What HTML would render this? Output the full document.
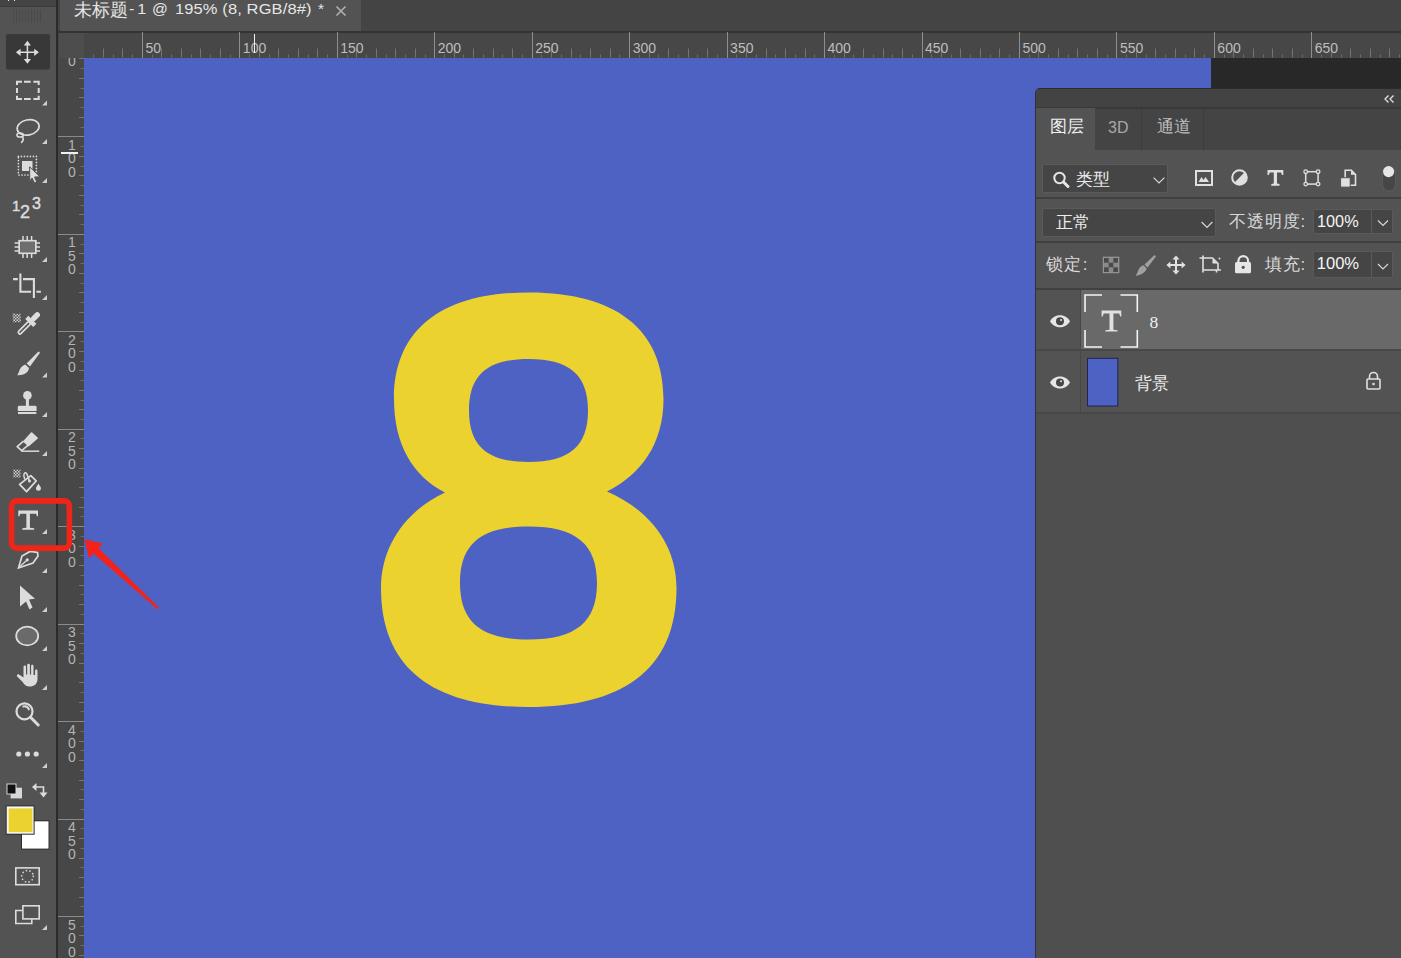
<!DOCTYPE html>
<html><head><meta charset="utf-8">
<style>
*{margin:0;padding:0;box-sizing:border-box}
html,body{width:1401px;height:958px;overflow:hidden;background:#282828;font-family:"Liberation Sans",sans-serif;-webkit-font-smoothing:antialiased}
.a{position:absolute}
#toolbar{left:0;top:0;width:56px;height:958px;background:#535353}
#tbtop{left:0;top:0;width:56px;height:7px;background:#444444}
#tbline{left:56px;top:0;width:2px;height:958px;background:#2b2b2b}
#tabbar{left:58px;top:0;width:1343px;height:32px;background:#444444}
#tab{left:60px;top:0;width:301px;height:31px;background:#535353}
#tabline{left:58px;top:31px;width:1343px;height:2px;background:#333}
#ruler-top{left:58px;top:33px;width:1343px;height:25px;background:#474747}
#ruler-left{left:58px;top:58px;width:26px;height:900px;background:#474747}
#corner{left:58px;top:33px;width:26px;height:25px;background:#4d4d4d;border-left:1px solid #444}
#canvas{left:84px;top:58px;width:1127px;height:900px;background:#4e62c4}
#paste{left:1211px;top:58px;width:190px;height:30px;background:#282828}
svg text{font-family:"Liberation Sans",sans-serif}
.rt text{font-size:14px;fill:#bdbdbd}
.rl text{font-size:14px;fill:#b4b4b4;text-anchor:middle}
#panel{left:1035px;top:88px;width:366px;height:870px;background:#4f4f4f;border-top-left-radius:5px;border-left:1px solid #2f3140;border-top:1px solid #2c2c2c;overflow:hidden}
.pt{color:#e8e8e8;font-size:16px;white-space:nowrap}
</style></head><body>
<div class="a" id="toolbar"></div>
<div class="a" id="tbtop"></div>
<div class="a" style="left:0;top:6px;width:56px;height:1px;background:#3b3b3b"></div>
<div class="a" style="left:7.8px;top:0;width:1.5px;height:1.2px;background:#f0f0f0"></div>
<div class="a" style="left:13.8px;top:0;width:1.5px;height:1.2px;background:#f0f0f0"></div>
<div class="a" id="tbline"></div>

<svg class="a" style="left:0;top:0" width="56" height="958">
<defs>
<pattern id="chk" width="3" height="3" patternUnits="userSpaceOnUse"><rect width="3" height="3" fill="#535353"/><rect width="1.5" height="1.5" fill="#cfcfcf"/><rect x="1.5" y="1.5" width="1.5" height="1.5" fill="#cfcfcf"/></pattern>
</defs>
<!-- grip -->
<g fill="#4a4a4a">
<rect x="13" y="10" width="1" height="12"/><rect x="16" y="10" width="1" height="12"/><rect x="19" y="10" width="1" height="12"/><rect x="22" y="10" width="1" height="12"/><rect x="25" y="10" width="1" height="12"/><rect x="28" y="10" width="1" height="12"/><rect x="31" y="10" width="1" height="12"/><rect x="34" y="10" width="1" height="12"/><rect x="37" y="10" width="1" height="12"/><rect x="40" y="10" width="1" height="12"/>
</g>
<!-- selected move tool bg -->
<rect x="6" y="34" width="44" height="35.5" rx="2" fill="#383838"/>
<g fill="#dcdcdc" stroke="none">
<!-- move -->
<path d="M27.40 40.80 L31.00 45.50 L28.15 45.50 L28.15 51.55 L34.20 51.55 L34.20 48.70 L38.90 52.30 L34.20 55.90 L34.20 53.05 L28.15 53.05 L28.15 59.10 L31.00 59.10 L27.40 63.80 L23.80 59.10 L26.65 59.10 L26.65 53.05 L20.60 53.05 L20.60 55.90 L15.90 52.30 L20.60 48.70 L20.60 51.55 L26.65 51.55 L26.65 45.50 L23.80 45.50 Z"/>
</g>
<g fill="none" stroke="#dcdcdc" stroke-width="2">
<!-- marquee dashed -->
<path d="M17 85 V81.7 H22 M24 81.7 H30.7 M33.4 81.7 H38.7 V85 M17 88 V93 M38.7 88 V93 M17 95.7 V99 H22 M24 99 H30.7 M33.4 99 H38.7 V95.7"/>
<!-- lasso -->
<ellipse cx="28.15" cy="127.4" rx="11.1" ry="7.6" transform="rotate(-12 28.15 127.4)" stroke-width="1.7"/>
<ellipse cx="20.1" cy="135" rx="3.2" ry="2.1" stroke-width="1.5"/><path d="M22.3 136.5 C23.8 138.5 23.4 140.5 21.6 142.4" stroke-width="1.6" stroke-linecap="round"/>
<!-- object select dotted -->
<path d="M18.4 156.4 H36.4 V175 H18.4 Z" stroke-dasharray="0 3" stroke-linecap="round" stroke-width="1.7"/>
<!-- frame -->
<rect x="19.2" y="240.8" width="16.6" height="12.4" stroke-width="1.8"/>
<path d="M23 236 V240 M27.2 236 V240 M31.6 236 V240 M23 254 V258 M27.2 254 V258 M31.6 254 V258 M14.6 243 H19 M14.6 247 H19 M14.6 251 H19 M36 243 H40 M36 247 H40 M36 251 H40" stroke-width="1.5"/>
<!-- crop -->
<path d="M20.4 273.6 V291.7 H31.1 M13.1 279.1 H17.8 M23 279.1 H33.9 V298 M36.4 291.7 H40.9" stroke-width="2.1"/>
<!-- eyedropper tube -->

<!-- eraser -->
<path d="M23.5 441.2 L17.2 446.6 L21.6 450.6 L28.2 445.2" stroke-width="1.7" stroke-linejoin="round"/>
<path d="M21.4 451.2 H39.3" stroke-width="1.5"/>
<!-- bucket -->
<path d="M30.8 475.6 L36.2 480.9 L26.6 491.6 L19.6 484.4 Z" stroke-width="1.7" stroke-linejoin="round"/>
<path d="M24.8 479.5 C22.6 474.5 24.6 471 26.6 473.5 L29.4 480.6" stroke-width="1.5"/>
<!-- pen outline -->
<path d="M18.5 568 L22 556 L30 551.5 L37.5 552.5 L38 556 L33 563 Z" stroke-width="1.7"/>
<path d="M19 567.5 L26.5 560.5" stroke-width="1.3"/>
<!-- ellipse -->
<ellipse cx="27.2" cy="636" rx="11" ry="9.3" fill="#6a6a6a" stroke-width="1.8"/>
<!-- zoom -->
<circle cx="24.5" cy="711.4" r="8" stroke-width="2.2"/>
<path d="M30.5 717.3 L38.2 725" stroke-width="3" stroke-linecap="round"/>
<path d="M23.2 706.5 A4.9 4.9 0 0 1 28.9 709.4" stroke-width="1.9" stroke-linecap="round"/>
<!-- quick mask -->
<rect x="15.8" y="867.9" width="23.4" height="16.8" stroke-width="1.6"/>
<circle cx="27.5" cy="876.3" r="5.8" stroke-dasharray="0 3.644" stroke-linecap="round" stroke-width="1.7"/>
<!-- screen mode -->
<rect x="22.9" y="905.8" width="16.3" height="13.1" stroke-width="1.6"/>
<path d="M22.1 910.5 H15.8 V923.5 H31.8 V918.9" stroke-width="1.6"/>
<!-- swap arrows -->
<path d="M36 787 H43.5 V794" stroke-width="1.6"/>
</g>
<g fill="#dcdcdc">
<!-- object select inner -->
<rect x="22" y="161" width="10.5" height="10"/>
<path d="M29.6 166.8 L40 176.8 L34.5 177 L36.8 182 L34.5 183 L32 178 L29.8 181.5 Z" stroke="#535353" stroke-width="1"/>
<!-- frame fill -->
<rect x="20.2" y="241.8" width="14.6" height="10.4" fill="#6e6e6e"/>
<!-- eyedropper -->
<g transform="translate(30.8 321.4) rotate(-45)">
<rect x="-17" y="-1.65" width="15.5" height="3.3" rx="1.65" fill="none" stroke="#dcdcdc" stroke-width="1.7"/>
<rect x="-2.2" y="-5.7" width="4.4" height="11.4"/>
<rect x="1.5" y="-2.75" width="10.4" height="5.5" rx="2.75"/>
</g>
<path d="M12.6 313 Q16.5 314.5 20.5 313.5 L21 322.5 Q17 321.5 13 322.5 Z" fill="url(#chk)"/>
<!-- brush -->
<path d="M38.2 351.8 C39.5 351.5 40 352.3 39.6 353.3 L30 366.4 L26.6 363.4 Z"/>
<path d="M25.3 364.6 L29 368 C28.5 372.5 24 375.5 17.3 375.2 C19.5 373 19 366.5 25.3 364.6 Z"/>
<!-- stamp -->
<circle cx="27.4" cy="395.4" r="4.3"/>
<rect x="25.9" y="398.5" width="3" height="8"/>
<path d="M19.2 405.8 H35.2 Q36.6 405.8 36.6 407.2 V410.9 H17.8 V407.2 Q17.8 405.8 19.2 405.8 Z"/>
<rect x="18" y="412" width="18.3" height="2"/>
<!-- eraser fill -->
<path d="M22.8 441.5 L31 432.5 Q31.6 431.9 32.2 432.5 L37.6 437.6 Q38.2 438.2 37.6 438.8 L28.6 446.6 Z"/>
<!-- bucket -->
<path d="M13.2 469.2 Q16.8 470.3 20.4 469.2 L20.6 477.8 Q17 476.8 13.4 477.8 Z" fill="url(#chk)"/>
<circle cx="29.5" cy="481" r="1.5"/>
<path d="M38.4 483.8 C40 486 41 487.3 41 488.3 A2.5 2.5 0 0 1 36 488.3 C36 487.3 37 486 38.4 483.8 Z"/>
<!-- pen dot -->
<circle cx="27.2" cy="559.8" r="1.6"/>
<!-- path select arrow -->
<path d="M20 585.6 L35 598.8 L29 599.5 L32.5 607.5 L29.5 609.5 L26 601.5 L20 606.6 Z"/>
<!-- hand -->
<path d="M22.6 682 L17.2 676.6 C16.2 675.5 17.5 673.4 19 674.4 L23.5 677.4 V666.8 C23.5 665.2 26 665.2 26 666.8 V674.5 H27.2 V665 C27.2 663.4 29.9 663.4 29.9 665 V674.5 H31.1 V666 C31.1 664.4 33.5 664.4 33.5 666 V675 H35.1 V670.6 C35.1 669 37.5 669 37.5 670.6 V679 C37.5 684 34 686.6 29.5 686.6 C26.5 686.6 24.5 685 22.6 682 Z"/>
<!-- dots -->
<circle cx="18.8" cy="754" r="2.6"/><circle cx="27.4" cy="754" r="2.6"/><circle cx="36.2" cy="754" r="2.6"/>
<!-- T -->
<path d="M18.3 510.5 H38 V516.3 H37 L36 513.8 H29.9 V527.8 L34.2 528.3 V529.8 H22.3 V528.3 L26.4 527.8 V513.8 H20.3 L19.3 516.3 H18.3 Z"/>
<!-- default colors -->
<rect x="10.6" y="787.7" width="11.4" height="10.7" fill="#d8d8d8"/>
<rect x="7" y="784" width="9" height="10" fill="#111" stroke="#d8d8d8" stroke-width="1"/>
<path d="M32 787 L36.5 783 V791 Z"/>
<path d="M39.5 792.5 H47.5 L43.5 797.5 Z"/>
<!-- swatches -->
<rect x="21" y="820.3" width="28.5" height="29.3" fill="#2c2c2c"/>
<rect x="22" y="821.3" width="26.5" height="27.3" fill="#ffffff"/>
<rect x="5.7" y="805.4" width="28.9" height="29.3" fill="#2c2c2c"/>
<rect x="6.7" y="806.4" width="26.9" height="27.3" fill="#f6f6f2"/>
<rect x="8.7" y="808.4" width="23.7" height="23.7" fill="#ebd22e"/>
</g>
<!-- corner triangles -->
<g fill="#cfcfcf">
<path d="M47 100.5 V105.5 H42 Z"/>
<path d="M47 139 V144 H42 Z"/>
<path d="M47 178 V183 H42 Z"/>
<path d="M47 257 V262 H42 Z"/>
<path d="M47 295 V300 H42 Z"/>
<path d="M47 372.5 V377.5 H42 Z"/>
<path d="M47 412 V417 H42 Z"/>
<path d="M47 451 V456 H42 Z"/>
<path d="M47 529 V534 H42 Z"/>
<path d="M47 568 V573 H42 Z"/>
<path d="M47 607 V612 H42 Z"/>
<path d="M47 646 V651 H42 Z"/>
<path d="M47 685 V690 H42 Z"/>
<path d="M47 763 V768 H42 Z"/>
<path d="M47 925 V930 H42 Z"/>
</g>
<!-- 123 text -->
<g fill="#dcdcdc" stroke="#dcdcdc" stroke-width="0.45" font-family="Liberation Sans">
<text x="12" y="211" font-size="15">1</text>
<text x="20" y="218" font-size="18">2</text>
<text x="32" y="209" font-size="16">3</text>
</g>
</svg>

<div class="a" id="tabbar"></div>
<div class="a" id="tab"></div>
<div class="a pt" style="left:74.4px;top:0px;line-height:20px;color:#e6e6e6;font-size:18px">未标题</div>
<div class="a pt" id="t1" style="left:128.5px;top:-1px;line-height:20px;color:#e6e6e6;font-size:15px;letter-spacing:2.6px;transform:scaleX(1.08);transform-origin:0 0">-1</div>
<div class="a pt" id="t2" style="left:152px;top:-1px;line-height:20px;color:#e6e6e6;font-size:15px;transform:scaleX(1.04);transform-origin:0 0">@</div>
<div class="a pt" id="t3" style="left:175px;top:-1px;line-height:20px;color:#e6e6e6;font-size:15px;letter-spacing:0.1px;transform:scaleX(1.1);transform-origin:0 0">195% (8, RGB/8#)</div>
<div class="a pt" id="t4" style="left:318px;top:-1px;line-height:20px;color:#e6e6e6;font-size:15.3px">*</div>
<svg class="a" style="left:334px;top:4px" width="14" height="14"><path d="M2.5 2.5 L11.5 11.5 M11.5 2.5 L2.5 11.5" stroke="#b4b4b4" stroke-width="1.5"/></svg>
<div class="a" id="tabline"></div>
<div class="a" id="ruler-top"></div>
<div class="a" id="ruler-left"></div>
<div class="a" id="canvas"></div>
<div class="a" id="paste"></div>
<svg class="a rt" style="left:0;top:32px" width="1401" height="26"><rect x="93" y="22.5" width="1" height="3" fill="#6a6a6a"/>
<rect x="103" y="16.5" width="1" height="9" fill="#747474"/>
<rect x="113" y="22.5" width="1" height="3" fill="#6a6a6a"/>
<rect x="122" y="16.5" width="1" height="9" fill="#747474"/>
<rect x="132" y="22.5" width="1" height="3" fill="#6a6a6a"/>
<rect x="142" y="0" width="1" height="26" fill="#8e8e8e"/>
<rect x="152" y="22.5" width="1" height="3" fill="#6a6a6a"/>
<rect x="161" y="16.5" width="1" height="9" fill="#747474"/>
<rect x="171" y="22.5" width="1" height="3" fill="#6a6a6a"/>
<rect x="181" y="16.5" width="1" height="9" fill="#747474"/>
<rect x="191" y="22.5" width="1" height="3" fill="#6a6a6a"/>
<rect x="200" y="16.5" width="1" height="9" fill="#747474"/>
<rect x="210" y="22.5" width="1" height="3" fill="#6a6a6a"/>
<rect x="220" y="16.5" width="1" height="9" fill="#747474"/>
<rect x="230" y="22.5" width="1" height="3" fill="#6a6a6a"/>
<text x="145.40" y="21">50</text>
<rect x="239" y="0" width="1" height="26" fill="#8e8e8e"/>
<rect x="249" y="22.5" width="1" height="3" fill="#6a6a6a"/>
<rect x="259" y="16.5" width="1" height="9" fill="#747474"/>
<rect x="269" y="22.5" width="1" height="3" fill="#6a6a6a"/>
<rect x="278" y="16.5" width="1" height="9" fill="#747474"/>
<rect x="288" y="22.5" width="1" height="3" fill="#6a6a6a"/>
<rect x="298" y="16.5" width="1" height="9" fill="#747474"/>
<rect x="308" y="22.5" width="1" height="3" fill="#6a6a6a"/>
<rect x="317" y="16.5" width="1" height="9" fill="#747474"/>
<rect x="327" y="22.5" width="1" height="3" fill="#6a6a6a"/>
<text x="242.85" y="21">100</text>
<rect x="337" y="0" width="1" height="26" fill="#8e8e8e"/>
<rect x="347" y="22.5" width="1" height="3" fill="#6a6a6a"/>
<rect x="356" y="16.5" width="1" height="9" fill="#747474"/>
<rect x="366" y="22.5" width="1" height="3" fill="#6a6a6a"/>
<rect x="376" y="16.5" width="1" height="9" fill="#747474"/>
<rect x="386" y="22.5" width="1" height="3" fill="#6a6a6a"/>
<rect x="395" y="16.5" width="1" height="9" fill="#747474"/>
<rect x="405" y="22.5" width="1" height="3" fill="#6a6a6a"/>
<rect x="415" y="16.5" width="1" height="9" fill="#747474"/>
<rect x="425" y="22.5" width="1" height="3" fill="#6a6a6a"/>
<text x="340.30" y="21">150</text>
<rect x="434" y="0" width="1" height="26" fill="#8e8e8e"/>
<rect x="444" y="22.5" width="1" height="3" fill="#6a6a6a"/>
<rect x="454" y="16.5" width="1" height="9" fill="#747474"/>
<rect x="463" y="22.5" width="1" height="3" fill="#6a6a6a"/>
<rect x="473" y="16.5" width="1" height="9" fill="#747474"/>
<rect x="483" y="22.5" width="1" height="3" fill="#6a6a6a"/>
<rect x="493" y="16.5" width="1" height="9" fill="#747474"/>
<rect x="502" y="22.5" width="1" height="3" fill="#6a6a6a"/>
<rect x="512" y="16.5" width="1" height="9" fill="#747474"/>
<rect x="522" y="22.5" width="1" height="3" fill="#6a6a6a"/>
<text x="437.75" y="21">200</text>
<rect x="532" y="0" width="1" height="26" fill="#8e8e8e"/>
<rect x="541" y="22.5" width="1" height="3" fill="#6a6a6a"/>
<rect x="551" y="16.5" width="1" height="9" fill="#747474"/>
<rect x="561" y="22.5" width="1" height="3" fill="#6a6a6a"/>
<rect x="571" y="16.5" width="1" height="9" fill="#747474"/>
<rect x="580" y="22.5" width="1" height="3" fill="#6a6a6a"/>
<rect x="590" y="16.5" width="1" height="9" fill="#747474"/>
<rect x="600" y="22.5" width="1" height="3" fill="#6a6a6a"/>
<rect x="610" y="16.5" width="1" height="9" fill="#747474"/>
<rect x="619" y="22.5" width="1" height="3" fill="#6a6a6a"/>
<text x="535.20" y="21">250</text>
<rect x="629" y="0" width="1" height="26" fill="#8e8e8e"/>
<rect x="639" y="22.5" width="1" height="3" fill="#6a6a6a"/>
<rect x="649" y="16.5" width="1" height="9" fill="#747474"/>
<rect x="658" y="22.5" width="1" height="3" fill="#6a6a6a"/>
<rect x="668" y="16.5" width="1" height="9" fill="#747474"/>
<rect x="678" y="22.5" width="1" height="3" fill="#6a6a6a"/>
<rect x="688" y="16.5" width="1" height="9" fill="#747474"/>
<rect x="697" y="22.5" width="1" height="3" fill="#6a6a6a"/>
<rect x="707" y="16.5" width="1" height="9" fill="#747474"/>
<rect x="717" y="22.5" width="1" height="3" fill="#6a6a6a"/>
<text x="632.65" y="21">300</text>
<rect x="727" y="0" width="1" height="26" fill="#8e8e8e"/>
<rect x="736" y="22.5" width="1" height="3" fill="#6a6a6a"/>
<rect x="746" y="16.5" width="1" height="9" fill="#747474"/>
<rect x="756" y="22.5" width="1" height="3" fill="#6a6a6a"/>
<rect x="766" y="16.5" width="1" height="9" fill="#747474"/>
<rect x="775" y="22.5" width="1" height="3" fill="#6a6a6a"/>
<rect x="785" y="16.5" width="1" height="9" fill="#747474"/>
<rect x="795" y="22.5" width="1" height="3" fill="#6a6a6a"/>
<rect x="805" y="16.5" width="1" height="9" fill="#747474"/>
<rect x="814" y="22.5" width="1" height="3" fill="#6a6a6a"/>
<text x="730.10" y="21">350</text>
<rect x="824" y="0" width="1" height="26" fill="#8e8e8e"/>
<rect x="834" y="22.5" width="1" height="3" fill="#6a6a6a"/>
<rect x="844" y="16.5" width="1" height="9" fill="#747474"/>
<rect x="853" y="22.5" width="1" height="3" fill="#6a6a6a"/>
<rect x="863" y="16.5" width="1" height="9" fill="#747474"/>
<rect x="873" y="22.5" width="1" height="3" fill="#6a6a6a"/>
<rect x="883" y="16.5" width="1" height="9" fill="#747474"/>
<rect x="892" y="22.5" width="1" height="3" fill="#6a6a6a"/>
<rect x="902" y="16.5" width="1" height="9" fill="#747474"/>
<rect x="912" y="22.5" width="1" height="3" fill="#6a6a6a"/>
<text x="827.55" y="21">400</text>
<rect x="922" y="0" width="1" height="26" fill="#8e8e8e"/>
<rect x="931" y="22.5" width="1" height="3" fill="#6a6a6a"/>
<rect x="941" y="16.5" width="1" height="9" fill="#747474"/>
<rect x="951" y="22.5" width="1" height="3" fill="#6a6a6a"/>
<rect x="960" y="16.5" width="1" height="9" fill="#747474"/>
<rect x="970" y="22.5" width="1" height="3" fill="#6a6a6a"/>
<rect x="980" y="16.5" width="1" height="9" fill="#747474"/>
<rect x="990" y="22.5" width="1" height="3" fill="#6a6a6a"/>
<rect x="999" y="16.5" width="1" height="9" fill="#747474"/>
<rect x="1009" y="22.5" width="1" height="3" fill="#6a6a6a"/>
<text x="925.00" y="21">450</text>
<rect x="1019" y="0" width="1" height="26" fill="#8e8e8e"/>
<rect x="1029" y="22.5" width="1" height="3" fill="#6a6a6a"/>
<rect x="1038" y="16.5" width="1" height="9" fill="#747474"/>
<rect x="1048" y="22.5" width="1" height="3" fill="#6a6a6a"/>
<rect x="1058" y="16.5" width="1" height="9" fill="#747474"/>
<rect x="1068" y="22.5" width="1" height="3" fill="#6a6a6a"/>
<rect x="1077" y="16.5" width="1" height="9" fill="#747474"/>
<rect x="1087" y="22.5" width="1" height="3" fill="#6a6a6a"/>
<rect x="1097" y="16.5" width="1" height="9" fill="#747474"/>
<rect x="1107" y="22.5" width="1" height="3" fill="#6a6a6a"/>
<text x="1022.45" y="21">500</text>
<rect x="1116" y="0" width="1" height="26" fill="#8e8e8e"/>
<rect x="1126" y="22.5" width="1" height="3" fill="#6a6a6a"/>
<rect x="1136" y="16.5" width="1" height="9" fill="#747474"/>
<rect x="1146" y="22.5" width="1" height="3" fill="#6a6a6a"/>
<rect x="1155" y="16.5" width="1" height="9" fill="#747474"/>
<rect x="1165" y="22.5" width="1" height="3" fill="#6a6a6a"/>
<rect x="1175" y="16.5" width="1" height="9" fill="#747474"/>
<rect x="1185" y="22.5" width="1" height="3" fill="#6a6a6a"/>
<rect x="1194" y="16.5" width="1" height="9" fill="#747474"/>
<rect x="1204" y="22.5" width="1" height="3" fill="#6a6a6a"/>
<text x="1119.90" y="21">550</text>
<rect x="1214" y="0" width="1" height="26" fill="#8e8e8e"/>
<rect x="1224" y="22.5" width="1" height="3" fill="#6a6a6a"/>
<rect x="1233" y="16.5" width="1" height="9" fill="#747474"/>
<rect x="1243" y="22.5" width="1" height="3" fill="#6a6a6a"/>
<rect x="1253" y="16.5" width="1" height="9" fill="#747474"/>
<rect x="1263" y="22.5" width="1" height="3" fill="#6a6a6a"/>
<rect x="1272" y="16.5" width="1" height="9" fill="#747474"/>
<rect x="1282" y="22.5" width="1" height="3" fill="#6a6a6a"/>
<rect x="1292" y="16.5" width="1" height="9" fill="#747474"/>
<rect x="1302" y="22.5" width="1" height="3" fill="#6a6a6a"/>
<text x="1217.35" y="21">600</text>
<rect x="1311" y="0" width="1" height="26" fill="#8e8e8e"/>
<rect x="1321" y="22.5" width="1" height="3" fill="#6a6a6a"/>
<rect x="1331" y="16.5" width="1" height="9" fill="#747474"/>
<rect x="1341" y="22.5" width="1" height="3" fill="#6a6a6a"/>
<rect x="1350" y="16.5" width="1" height="9" fill="#747474"/>
<rect x="1360" y="22.5" width="1" height="3" fill="#6a6a6a"/>
<rect x="1370" y="16.5" width="1" height="9" fill="#747474"/>
<rect x="1380" y="22.5" width="1" height="3" fill="#6a6a6a"/>
<rect x="1389" y="16.5" width="1" height="9" fill="#747474"/>
<rect x="1399" y="22.5" width="1" height="3" fill="#6a6a6a"/>
<text x="1314.80" y="21">650</text></svg>
<svg class="a rl" style="left:0;top:0" width="90" height="958"><text x="72" y="-45.00">0</text>
<rect x="79" y="58" width="5" height="1" fill="#747474"/>
<rect x="80.5" y="68" width="3.5" height="1" fill="#6a6a6a"/>
<rect x="79" y="78" width="5" height="1" fill="#747474"/>
<rect x="80.5" y="88" width="3.5" height="1" fill="#6a6a6a"/>
<rect x="79" y="97" width="5" height="1" fill="#747474"/>
<rect x="80.5" y="107" width="3.5" height="1" fill="#6a6a6a"/>
<rect x="79" y="117" width="5" height="1" fill="#747474"/>
<rect x="80.5" y="127" width="3.5" height="1" fill="#6a6a6a"/>
<text x="72" y="52.45">5</text>
<text x="72" y="65.95">0</text>
<rect x="58" y="136" width="26" height="1" fill="#8a8a8a"/>
<rect x="80.5" y="146" width="3.5" height="1" fill="#6a6a6a"/>
<rect x="79" y="156" width="5" height="1" fill="#747474"/>
<rect x="80.5" y="166" width="3.5" height="1" fill="#6a6a6a"/>
<rect x="79" y="175" width="5" height="1" fill="#747474"/>
<rect x="80.5" y="185" width="3.5" height="1" fill="#6a6a6a"/>
<rect x="79" y="195" width="5" height="1" fill="#747474"/>
<rect x="80.5" y="205" width="3.5" height="1" fill="#6a6a6a"/>
<rect x="79" y="214" width="5" height="1" fill="#747474"/>
<rect x="80.5" y="224" width="3.5" height="1" fill="#6a6a6a"/>
<text x="72" y="149.90">1</text>
<text x="72" y="163.40">0</text>
<text x="72" y="176.90">0</text>
<rect x="58" y="234" width="26" height="1" fill="#8a8a8a"/>
<rect x="80.5" y="244" width="3.5" height="1" fill="#6a6a6a"/>
<rect x="79" y="253" width="5" height="1" fill="#747474"/>
<rect x="80.5" y="263" width="3.5" height="1" fill="#6a6a6a"/>
<rect x="79" y="273" width="5" height="1" fill="#747474"/>
<rect x="80.5" y="283" width="3.5" height="1" fill="#6a6a6a"/>
<rect x="79" y="292" width="5" height="1" fill="#747474"/>
<rect x="80.5" y="302" width="3.5" height="1" fill="#6a6a6a"/>
<rect x="79" y="312" width="5" height="1" fill="#747474"/>
<rect x="80.5" y="322" width="3.5" height="1" fill="#6a6a6a"/>
<text x="72" y="247.35">1</text>
<text x="72" y="260.85">5</text>
<text x="72" y="274.35">0</text>
<rect x="58" y="331" width="26" height="1" fill="#8a8a8a"/>
<rect x="80.5" y="341" width="3.5" height="1" fill="#6a6a6a"/>
<rect x="79" y="351" width="5" height="1" fill="#747474"/>
<rect x="80.5" y="361" width="3.5" height="1" fill="#6a6a6a"/>
<rect x="79" y="370" width="5" height="1" fill="#747474"/>
<rect x="80.5" y="380" width="3.5" height="1" fill="#6a6a6a"/>
<rect x="79" y="390" width="5" height="1" fill="#747474"/>
<rect x="80.5" y="400" width="3.5" height="1" fill="#6a6a6a"/>
<rect x="79" y="409" width="5" height="1" fill="#747474"/>
<rect x="80.5" y="419" width="3.5" height="1" fill="#6a6a6a"/>
<text x="72" y="344.80">2</text>
<text x="72" y="358.30">0</text>
<text x="72" y="371.80">0</text>
<rect x="58" y="429" width="26" height="1" fill="#8a8a8a"/>
<rect x="80.5" y="438" width="3.5" height="1" fill="#6a6a6a"/>
<rect x="79" y="448" width="5" height="1" fill="#747474"/>
<rect x="80.5" y="458" width="3.5" height="1" fill="#6a6a6a"/>
<rect x="79" y="468" width="5" height="1" fill="#747474"/>
<rect x="80.5" y="477" width="3.5" height="1" fill="#6a6a6a"/>
<rect x="79" y="487" width="5" height="1" fill="#747474"/>
<rect x="80.5" y="497" width="3.5" height="1" fill="#6a6a6a"/>
<rect x="79" y="507" width="5" height="1" fill="#747474"/>
<rect x="80.5" y="516" width="3.5" height="1" fill="#6a6a6a"/>
<text x="72" y="442.25">2</text>
<text x="72" y="455.75">5</text>
<text x="72" y="469.25">0</text>
<rect x="58" y="526" width="26" height="1" fill="#8a8a8a"/>
<rect x="80.5" y="536" width="3.5" height="1" fill="#6a6a6a"/>
<rect x="79" y="546" width="5" height="1" fill="#747474"/>
<rect x="80.5" y="555" width="3.5" height="1" fill="#6a6a6a"/>
<rect x="79" y="565" width="5" height="1" fill="#747474"/>
<rect x="80.5" y="575" width="3.5" height="1" fill="#6a6a6a"/>
<rect x="79" y="585" width="5" height="1" fill="#747474"/>
<rect x="80.5" y="594" width="3.5" height="1" fill="#6a6a6a"/>
<rect x="79" y="604" width="5" height="1" fill="#747474"/>
<rect x="80.5" y="614" width="3.5" height="1" fill="#6a6a6a"/>
<text x="72" y="539.70">3</text>
<text x="72" y="553.20">0</text>
<text x="72" y="566.70">0</text>
<rect x="58" y="624" width="26" height="1" fill="#8a8a8a"/>
<rect x="80.5" y="633" width="3.5" height="1" fill="#6a6a6a"/>
<rect x="79" y="643" width="5" height="1" fill="#747474"/>
<rect x="80.5" y="653" width="3.5" height="1" fill="#6a6a6a"/>
<rect x="79" y="663" width="5" height="1" fill="#747474"/>
<rect x="80.5" y="672" width="3.5" height="1" fill="#6a6a6a"/>
<rect x="79" y="682" width="5" height="1" fill="#747474"/>
<rect x="80.5" y="692" width="3.5" height="1" fill="#6a6a6a"/>
<rect x="79" y="702" width="5" height="1" fill="#747474"/>
<rect x="80.5" y="711" width="3.5" height="1" fill="#6a6a6a"/>
<text x="72" y="637.15">3</text>
<text x="72" y="650.65">5</text>
<text x="72" y="664.15">0</text>
<rect x="58" y="721" width="26" height="1" fill="#8a8a8a"/>
<rect x="80.5" y="731" width="3.5" height="1" fill="#6a6a6a"/>
<rect x="79" y="741" width="5" height="1" fill="#747474"/>
<rect x="80.5" y="750" width="3.5" height="1" fill="#6a6a6a"/>
<rect x="79" y="760" width="5" height="1" fill="#747474"/>
<rect x="80.5" y="770" width="3.5" height="1" fill="#6a6a6a"/>
<rect x="79" y="780" width="5" height="1" fill="#747474"/>
<rect x="80.5" y="789" width="3.5" height="1" fill="#6a6a6a"/>
<rect x="79" y="799" width="5" height="1" fill="#747474"/>
<rect x="80.5" y="809" width="3.5" height="1" fill="#6a6a6a"/>
<text x="72" y="734.60">4</text>
<text x="72" y="748.10">0</text>
<text x="72" y="761.60">0</text>
<rect x="58" y="819" width="26" height="1" fill="#8a8a8a"/>
<rect x="80.5" y="828" width="3.5" height="1" fill="#6a6a6a"/>
<rect x="79" y="838" width="5" height="1" fill="#747474"/>
<rect x="80.5" y="848" width="3.5" height="1" fill="#6a6a6a"/>
<rect x="79" y="858" width="5" height="1" fill="#747474"/>
<rect x="80.5" y="867" width="3.5" height="1" fill="#6a6a6a"/>
<rect x="79" y="877" width="5" height="1" fill="#747474"/>
<rect x="80.5" y="887" width="3.5" height="1" fill="#6a6a6a"/>
<rect x="79" y="897" width="5" height="1" fill="#747474"/>
<rect x="80.5" y="906" width="3.5" height="1" fill="#6a6a6a"/>
<text x="72" y="832.05">4</text>
<text x="72" y="845.55">5</text>
<text x="72" y="859.05">0</text>
<rect x="58" y="916" width="26" height="1" fill="#8a8a8a"/>
<rect x="80.5" y="926" width="3.5" height="1" fill="#6a6a6a"/>
<rect x="79" y="935" width="5" height="1" fill="#747474"/>
<rect x="80.5" y="945" width="3.5" height="1" fill="#6a6a6a"/>
<rect x="79" y="955" width="5" height="1" fill="#747474"/>
<text x="72" y="929.50">5</text>
<text x="72" y="943.00">0</text>
<text x="72" y="956.50">0</text>
<text x="72" y="1026.95">5</text>
<text x="72" y="1040.45">5</text>
<text x="72" y="1053.95">0</text></svg>
<div class="a" id="corner"></div>
<div class="a" style="left:253.7px;top:34px;width:1.5px;height:18.5px;background:#f0f0f0"></div>
<div class="a" style="left:61px;top:152px;width:17px;height:1.5px;background:#f0f0f0"></div>

<!-- big 8 -->
<svg class="a" style="left:0;top:0" width="1401" height="958">
<path fill="#ecd22f" fill-rule="evenodd" d="M529 292.5 C615.1 292.5 663.5 328.7 663.5 399 C663.5 445 640 475 607 491.5 C650 510 676.5 545 676.5 588 C676.5 671.3 620.3 707 528.5 707 C437 707 381 671.3 381 588 C381 545 407 510 445 492.5 C413 476 394 445 394 399 C394 328.7 442.6 292.5 529 292.5 Z
M528.5 359.0 C569.6 359.0 588.0 375.0 588.0 410.5 C588.0 446.0 569.6 462.0 528.5 462.0 C487.4 462.0 469.0 446.0 469.0 410.5 C469.0 375.0 487.4 359.0 528.5 359.0 Z
M528.5 526.5 C575.8 526.5 597.0 544.0 597.0 583 C597.0 622.0 575.8 639.5 528.5 639.5 C481.2 639.5 460.0 622.0 460.0 583 C460.0 544.0 481.2 526.5 528.5 526.5 Z"/>
</svg>


<div class="a" id="panel">
  <div class="a" style="left:0;top:61px;width:366px;height:263px;background:#535353"></div>
  <div class="a" style="left:0;top:0;width:366px;height:18px;background:#434343"></div>
  <div class="a" style="left:0;top:18px;width:366px;height:2px;background:#393939"></div>
  <div class="a" style="left:0;top:20px;width:366px;height:41px;background:#444444"></div>
  <div class="a" style="left:0;top:19px;width:59px;height:50px;background:#535353"></div>
  <div class="a" style="left:105px;top:20px;width:1px;height:41px;background:#3c3c3c"></div>
  <div class="a" style="left:167px;top:20px;width:1px;height:41px;background:#3c3c3c"></div>
</div>
<svg class="a" style="left:1381px;top:94px" width="18" height="12"><path d="M7.5 1.5 L4 5 L7.5 8.5 M12.5 1.5 L9 5 L12.5 8.5" fill="none" stroke="#e6e6e6" stroke-width="1.3"/></svg>
<div class="a pt" style="left:1049.5px;top:117px;font-size:17px;line-height:20px;color:#f0f0f0">图层</div>
<div class="a pt" style="left:1108px;top:118px;font-size:16px;line-height:20px;color:#a8a8a8">3D</div>
<div class="a pt" style="left:1156.5px;top:117px;font-size:17px;line-height:20px;color:#bcbcbc">通道</div>

<!-- filter row -->
<div class="a" style="left:1042px;top:164px;width:126px;height:29px;background:#454545;border:1px solid #5a5a5a;border-radius:2px"></div>
<svg class="a" style="left:1050px;top:168px" width="24" height="24"><circle cx="9.5" cy="10" r="5.2" fill="none" stroke="#e6e6e6" stroke-width="2"/><path d="M13.5 14 L18 18.5" stroke="#e6e6e6" stroke-width="3" stroke-linecap="round"/></svg>
<div class="a pt" style="left:1075.8px;top:169.5px;font-size:17px;line-height:20px;color:#ececec">类型</div>
<svg class="a" style="left:1150px;top:174px" width="18" height="14"><path d="M3.6 3.6 L9 9 L14.4 3.6" fill="none" stroke="#d8d8d8" stroke-width="1.2"/></svg>
<svg class="a" style="left:1190px;top:164px" width="211" height="30">
  <g fill="none" stroke="#e0e0e0" stroke-width="2">
    <rect x="6" y="7" width="16" height="14"/>
    <circle cx="49.5" cy="13.5" r="7.3"/>
    <rect x="115.7" y="7.7" width="12.4" height="12.4" stroke-width="1.5"/>
  </g>
  <g fill="#e0e0e0">
    <path d="M8.5 18 L11.5 13 L13.5 16 L15.5 13 L19 18 Z"/>
    <path d="M54.7 8.3 A7.3 7.3 0 0 1 44.3 18.7 Z"/>
    <path d="M77.5 6 H93.3 V11 H92 L91 8.5 H87 V19.5 L89.5 20 V21.8 H81.3 V20 L83.8 19.5 V8.5 H79.8 L78.8 11 H77.5 Z"/>
    <circle cx="115.7" cy="7.7" r="1.8" stroke="#e0e0e0" stroke-width="1.3" fill="#535353"/>
    <circle cx="128.1" cy="7.7" r="1.8" stroke="#e0e0e0" stroke-width="1.3" fill="#535353"/>
    <circle cx="115.7" cy="20.1" r="1.8" stroke="#e0e0e0" stroke-width="1.3" fill="#535353"/>
    <circle cx="128.1" cy="20.1" r="1.8" stroke="#e0e0e0" stroke-width="1.3" fill="#535353"/>
    <path d="M155.2 6.3 H161.3 L165.5 10.5 V21.2 H155.2 Z" fill="none" stroke="#e0e0e0" stroke-width="1.6"/>
    <path d="M161 6.5 V10.8 H165.3 Z"/>
    <rect x="150.6" y="13.7" width="9.6" height="9.4" stroke="#535353" stroke-width="1"/>
    <rect x="192.6" y="2.2" width="12.8" height="24.8" rx="6.4" fill="#464646" stroke="#5e5e5e" stroke-width="0.8"/>
    <circle cx="198.6" cy="7.6" r="5.6" fill="#e6e6e6"/>
  </g>
</svg>
<div class="a" style="left:1036px;top:197px;width:365px;height:2px;background:#404040"></div>

<!-- blend row -->
<div class="a" style="left:1042px;top:208px;width:174px;height:29px;background:#454545;border:1px solid #5a5a5a;border-radius:2px"></div>
<div class="a pt" style="left:1056px;top:213px;font-size:17px;line-height:20px;color:#ececec">正常</div>
<svg class="a" style="left:1198px;top:217px" width="18" height="14"><path d="M3.6 5 L9 10.4 L14.4 5" fill="none" stroke="#d8d8d8" stroke-width="1.2"/></svg>
<div class="a pt" style="left:1229px;top:211.5px;font-size:17px;line-height:20px;color:#d8d8d8;letter-spacing:0.9px">不透明度:</div>
<div class="a" style="left:1313px;top:209px;width:80px;height:25px;background:#454545;border:1px solid #5a5a5a;border-radius:2px"></div>
<div class="a" style="left:1371px;top:210px;width:1px;height:23px;background:#5a5a5a"></div>
<div class="a pt" style="left:1317px;top:211.4px;font-size:16.3px;line-height:20px;color:#f4f4f4">100%</div>
<svg class="a" style="left:1374px;top:216px" width="18" height="14"><path d="M4 4.5 L9 9.5 L14 4.5" fill="none" stroke="#d8d8d8" stroke-width="1.2"/></svg>
<div class="a" style="left:1036px;top:241px;width:365px;height:2px;background:#404040"></div>

<!-- lock row -->
<div class="a pt" style="left:1046.3px;top:255px;font-size:17px;line-height:20px;color:#dcdcdc;letter-spacing:1.2px">锁定:</div>
<svg class="a" style="left:1096px;top:250px" width="170" height="30">
  <g>
    <rect x="7.3" y="7.2" width="15.5" height="15.5" fill="#8e8e8e" stroke="#9a9a9a" stroke-width="1"/>
    <rect x="8" y="8" width="14" height="14" fill="#8a8a8a"/>
    <g fill="#4a4a4a"><rect x="8" y="8" width="4.7" height="4.7"/><rect x="17.3" y="8" width="4.7" height="4.7"/><rect x="12.7" y="12.7" width="4.6" height="4.6"/><rect x="8" y="17.3" width="4.7" height="4.7"/><rect x="17.3" y="17.3" width="4.7" height="4.7"/></g>
  </g>
  <g fill="#a0a0a0">
    <path d="M58.5 5 L60 6.5 L51.5 17.5 L48.5 14.5 Z"/>
    <path d="M47.5 15.3 L50.7 18.5 C49.5 22.5 45 25 39.5 26 C42 23.5 42 16.5 47.5 15.3 Z"/>
  </g>
  <g fill="#e0e0e0">
    <path d="M80 5.4 L83.6 9.4 L81 9.4 L81 14 L85.6 14 L85.6 11.4 L89.6 15 L85.6 18.6 L85.6 16 L81 16 L81 20.6 L83.6 20.6 L80 24.6 L76.4 20.6 L79 20.6 L79 16 L74.4 16 L74.4 18.6 L70.4 15 L74.4 11.4 L74.4 14 L79 14 L79 9.4 L76.4 9.4 Z"/>
  </g>
  <g fill="none" stroke="#e0e0e0" stroke-width="1.6">
    <path d="M107 8 H116.5 L122 13.5 V20 H107 Z M103.5 8 H107 M107 5.5 V8 M107 20 V22.5 M120.5 20 V22.5 M122 20 H125"/>
    <path d="M116.5 8.5 V13.5 H121.5 Z" fill="#e0e0e0" stroke="none"/>
    <circle cx="123.5" cy="8.5" r="0.9" fill="#e0e0e0" stroke="none"/>
  </g>
  <g fill="#e6e6e6">
    <path d="M142.4 13 V11 A4.85 4.85 0 0 1 152.1 11 V13" fill="none" stroke="#e6e6e6" stroke-width="2.2"/>
    <rect x="139" y="12" width="16" height="11.2" rx="1.5"/>
    <circle cx="147.2" cy="17.3" r="1.6" fill="#535353"/>
  </g>
</svg>
<div class="a pt" style="left:1264.9px;top:254.7px;font-size:17px;line-height:20px;color:#dcdcdc;letter-spacing:0.8px">填充:</div>
<div class="a" style="left:1313px;top:251px;width:80px;height:27px;background:#454545;border:1px solid #5a5a5a;border-radius:2px"></div>
<div class="a" style="left:1371px;top:252px;width:1px;height:25px;background:#5a5a5a"></div>
<div class="a pt" style="left:1316.7px;top:254.2px;font-size:16.6px;line-height:20px;color:#f4f4f4">100%</div>
<svg class="a" style="left:1374px;top:259px" width="18" height="14"><path d="M4 5 L9 10 L14 5" fill="none" stroke="#d8d8d8" stroke-width="1.2"/></svg>
<div class="a" style="left:1036px;top:288px;width:365px;height:2px;background:#404040"></div>

<!-- layers -->
<div class="a" style="left:1081px;top:290px;width:320px;height:59px;background:#696969"></div>
<div class="a" style="left:1036px;top:349px;width:365px;height:2px;background:#484848"></div>
<div class="a" style="left:1036px;top:412px;width:365px;height:2px;background:#484848"></div>
<div class="a" style="left:1080px;top:290px;width:1px;height:122px;background:#474747"></div>
<svg class="a" style="left:1036px;top:290px" width="365" height="125">
  <g fill="#e6e6e6">
    <path d="M14 31.3 C17 26.5 20.5 25.3 24 25.3 C27.5 25.3 31 26.5 34 31.3 C31 36.1 27.5 37.3 24 37.3 C20.5 37.3 17 36.1 14 31.3 Z"/>
    <path d="M14 92.6 C17 87.8 20.5 86.6 24 86.6 C27.5 86.6 31 87.8 34 92.6 C31 97.4 27.5 98.6 24 98.6 C20.5 98.6 17 97.4 14 92.6 Z"/>
  </g>
  <g fill="#474747">
    <circle cx="24" cy="31.3" r="4"/><circle cx="24" cy="92.6" r="4"/>
  </g>
  <g fill="#e6e6e6"><circle cx="25" cy="30" r="1"/><circle cx="25" cy="91.3" r="1"/></g>
  <g fill="none" stroke="#f4f4f4" stroke-width="1.6">
    <path d="M49 22 V5 H66 M84.5 5 H101.3 V22 M101.3 40 V57 H84.5 M66 57 H49 V40"/>
  </g>
  <path fill="#e0e0e0" d="M65.6 20.4 H85.3 V26.5 H84.2 L83.2 23.5 H77.4 V39.8 L81.5 40.2 V41.5 H69.4 V40.2 L73.5 39.8 V23.5 H67.7 L66.7 26.5 H65.6 Z"/>
  <rect x="51.5" y="68.3" width="30.3" height="47.7" fill="#4e62c4" stroke="#1e2550" stroke-width="1"/>
  <path d="M333.5 89 V86.5 A4 4 0 0 1 341.5 86.5 V89" fill="none" stroke="#e0e0e0" stroke-width="1.6"/>
  <rect x="331" y="89" width="13" height="10" rx="1" fill="none" stroke="#e0e0e0" stroke-width="1.6"/>
  <circle cx="337.5" cy="94" r="1.3" fill="#e0e0e0"/>
</svg>
<div class="a" style="left:1149.5px;top:312px;font-family:'Liberation Serif',serif;font-size:17.5px;line-height:20px;color:#f0f0f0">8</div>
<div class="a pt" style="left:1135.4px;top:373.5px;font-size:17px;line-height:20px;color:#ececec">背景</div>

<!-- red annotation -->
<svg class="a" style="left:0;top:0" width="200" height="640">
  <rect x="11.6" y="500.9" width="57.8" height="47.2" rx="5" fill="none" stroke="#ef2519" stroke-width="5.6"/>
  <path d="M84.5 539.3 L103 543.5 L98.5 548 L159 607.8 L157.5 609.3 L93.5 553.5 L89 558.3 Z" fill="#f5221a"/>
</svg>

</body></html>
